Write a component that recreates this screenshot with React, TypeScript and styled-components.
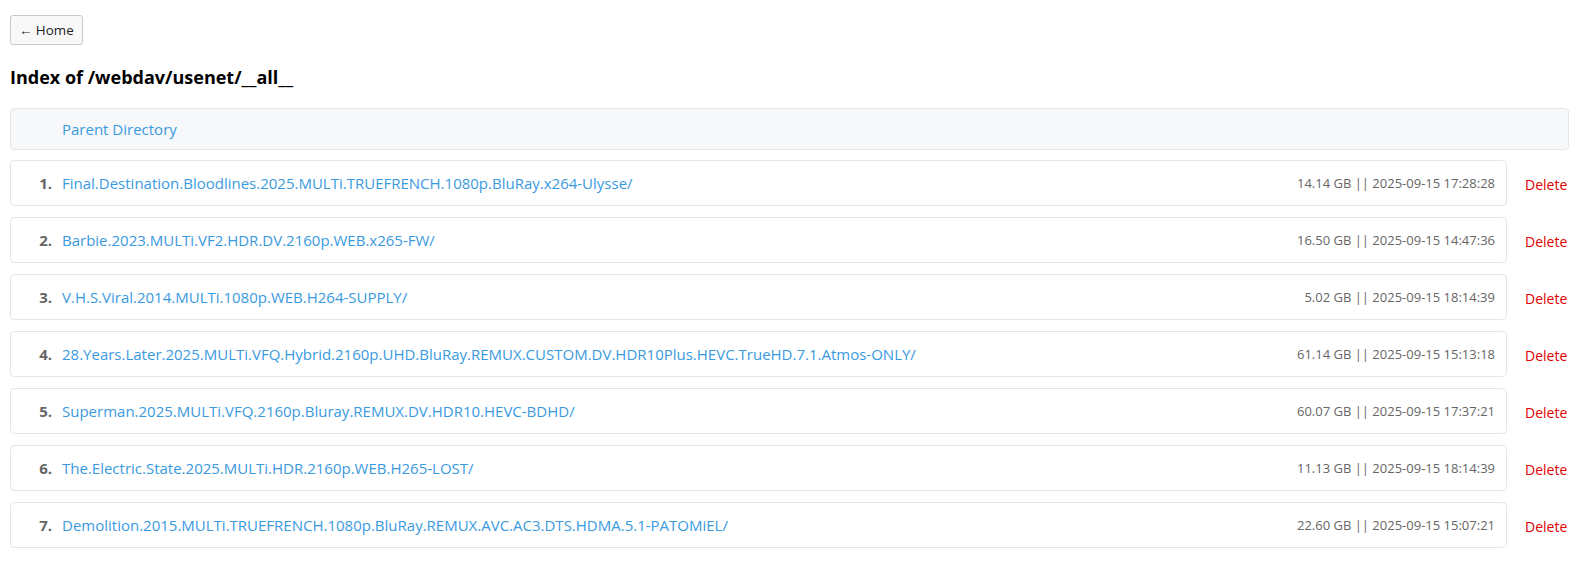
import React from 'react';
import styled, { createGlobalStyle } from 'styled-components';

const GlobalStyle = createGlobalStyle`
  body {
    margin: 0;
    background: #ffffff;
    font-family: "Open Sans", "Noto Sans", Arial, sans-serif;
    color: #000;
  }
`;

const Page = styled.div`
  padding: 15px 12px 0 10px;
`;

const HomeButton = styled.button`
  height: 30px;
  padding: 0 8px;
  font-family: inherit;
  font-size: 13.4px;
  color: #222;
  background: #f8f8f8;
  border: 1px solid #c9c9c9;
  border-radius: 3px;
  cursor: pointer;
`;

const Title = styled.h1`
  margin: 20px 0 19px;
  font-size: 18px;
  line-height: 24px;
  font-weight: 700;
`;

const ParentBox = styled.div`
  height: 42px;
  box-sizing: border-box;
  display: flex;
  align-items: center;
  padding-left: 51px;
  background: #f6f8fa;
  border: 1px solid #e4e6e9;
  border-radius: 4px;
  margin-bottom: 10px;
`;

const Link = styled.a`
  color: #3a9ae0;
  text-decoration: none;
  font-size: 15px;
  white-space: nowrap;
`;

const List = styled.div`
  display: flex;
  flex-direction: column;
  gap: 11px;
`;

const Row = styled.div`
  display: flex;
  align-items: center;
`;

const Card = styled.div`
  flex: 1;
  height: 46px;
  box-sizing: border-box;
  display: flex;
  align-items: center;
  padding: 0 11px 0 15px;
  border: 1px solid #e6e6e6;
  border-radius: 4px;
  background: #fff;
`;

const Num = styled.span`
  width: 26px;
  text-align: right;
  margin-right: 10px;
  font-weight: 700;
  font-size: 15px;
  color: #666;
`;

const Meta = styled.span`
  margin-left: auto;
  margin-bottom: 1px;
  font-size: 13px;
  color: #666;
  white-space: nowrap;
`;

const Delete = styled.a`
  width: 44px;
  margin: 3px 0 0 18px;
  font-size: 14px;
  color: #e00000;
  cursor: pointer;
`;

const entries = [
  ['Final.Destination.Bloodlines.2025.MULTi.TRUEFRENCH.1080p.BluRay.x264-Ulysse/', '14.14 GB || 2025-09-15 17:28:28'],
  ['Barbie.2023.MULTi.VF2.HDR.DV.2160p.WEB.x265-FW/', '16.50 GB || 2025-09-15 14:47:36'],
  ['V.H.S.Viral.2014.MULTi.1080p.WEB.H264-SUPPLY/', '5.02 GB || 2025-09-15 18:14:39'],
  ['28.Years.Later.2025.MULTi.VFQ.Hybrid.2160p.UHD.BluRay.REMUX.CUSTOM.DV.HDR10Plus.HEVC.TrueHD.7.1.Atmos-ONLY/', '61.14 GB || 2025-09-15 15:13:18'],
  ['Superman.2025.MULTi.VFQ.2160p.Bluray.REMUX.DV.HDR10.HEVC-BDHD/', '60.07 GB || 2025-09-15 17:37:21'],
  ['The.Electric.State.2025.MULTi.HDR.2160p.WEB.H265-LOST/', '11.13 GB || 2025-09-15 18:14:39'],
  ['Demolition.2015.MULTi.TRUEFRENCH.1080p.BluRay.REMUX.AVC.AC3.DTS.HDMA.5.1-PATOMiEL/', '22.60 GB || 2025-09-15 15:07:21'],
];

const App: React.FC = () => {
  return (
    <Page>
      <GlobalStyle />
      <HomeButton>← Home</HomeButton>
      <Title>Index of /webdav/usenet/__all__</Title>
      <ParentBox>
        <Link href="#">Parent Directory</Link>
      </ParentBox>
      <List>
        {entries.map(([name, meta], i) => (
          <Row key={name}>
            <Card>
              <Num>{i + 1}.</Num>
              <Link href="#">{name}</Link>
              <Meta>{meta}</Meta>
            </Card>
            <Delete>Delete</Delete>
          </Row>
        ))}
      </List>
    </Page>
  );
};

export default App;
